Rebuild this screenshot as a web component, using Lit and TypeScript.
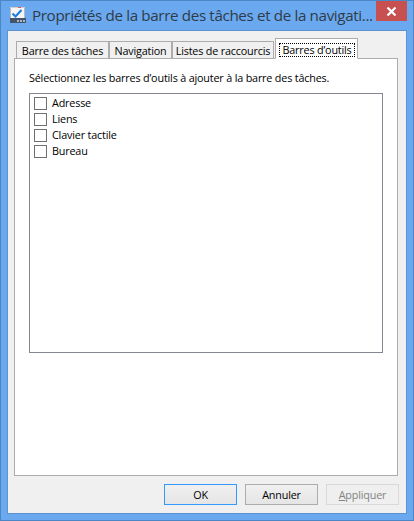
import { LitElement, html, css } from "lit";
import { customElement } from "lit/decorators.js";

@customElement("app-root")
export class AppRoot extends LitElement {
  static styles = css`
    :host { display: block; width: 414px; height: 521px; font-family: "Open Sans", "Noto Sans", sans-serif; font-size: 10.8px; letter-spacing: -0.18px; color: #000; }
    * { box-sizing: border-box; }
    .window { width: 414px; height: 521px; background: #6aa9ef; border: 1px solid #4d86c4; display: flex; flex-direction: column; padding: 0 6px 6px; overflow: hidden; }
    .title { height: 29px; flex: none; display: flex; align-items: flex-start; }
    .icon { width: 16px; height: 16px; margin: 6px 0 0 3px; flex: none; }
    .title-text { margin: 2px 0 0 6px; font-size: 15.2px; letter-spacing: -0.36px; line-height: 24px; color: #2f3b49; white-space: nowrap; flex: 1; min-width: 0; }
    .close { width: 31px; height: 20px; background: #c75050; display: flex; align-items: center; justify-content: center; flex: none; }
    .client { flex: 1; background: #f0f0f0; display: flex; flex-direction: column; padding: 0 7px 0 6px; border: 1px solid #5f93cf; }
    .tabs { display: flex; height: 28px; flex: none; align-items: flex-end; padding-left: 2px; position: relative; z-index: 1; margin-bottom: -1px; }
    .tab { height: 18px; border: 1px solid #acacac; background: #f0f0f0; display: flex; align-items: center; justify-content: center; white-space: nowrap; flex: none; }
    .tab.active { height: 21px; background: #fff; border-bottom-color: #fff; padding: 4px 2px 1px 3px; margin-left: 1px; }
    .focus { width: 100%; height: 100%; border: 1px dotted #000; display: flex; align-items: center; justify-content: center; padding-bottom: 1px; }
    .panel { height: 418px; width: 384px; flex: none; background: #fff; border: 1px solid #acacac; padding: 11px 14px 0; }
    .panel p { margin: 0 0 8px; line-height: 15px; white-space: nowrap; }
    .list { width: 354px; height: 260px; border: 1px solid #828790; padding: 3px 4px; }
    .row { display: flex; align-items: flex-start; height: 16px; gap: 5px; line-height: 12px; }
    .box { width: 13px; height: 13px; border: 1px solid #707070; background: #fff; flex: none; }
    .buttons { display: flex; gap: 8px; margin-top: 8px; padding-left: 150px; }
    .btn { width: 73px; height: 21px; flex: none; border: 1px solid #acacac; background: linear-gradient(#f0f0f0, #e5e5e5); display: flex; align-items: center; justify-content: center; }
    .btn.default { border-color: #3399ff; }
    .btn.disabled { border-color: #d9d9d9; background: #efefef; color: #838383; }
    u { text-underline-offset: 1px; }
  `;

  render() {
    return html`<div class="window">
      <div class="title">
        <svg class="icon" viewBox="0 0 16 16">
          <rect x="0.5" y="0.5" width="14" height="11" fill="#f6f6f6" stroke="#b9b9b9"/>
          <rect x="0" y="0" width="15" height="1" fill="#cfcfcf"/>
          <rect x="8" y="0" width="3" height="1" fill="#d65a5a"/>
          <path d="M2.5 6.5 L5.5 9.5 L11.5 3" fill="none" stroke="#1f7fe0" stroke-width="2.2"/>
          <rect x="0" y="11" width="16" height="5" fill="#44546a"/>
          <rect x="7" y="13" width="2" height="2" fill="#aeb8c4"/>
          <rect x="10" y="13" width="2" height="2" fill="#aeb8c4"/>
          <rect x="13" y="13" width="2" height="2" fill="#aeb8c4"/>
        </svg>
        <div class="title-text">Propriétés de la barre des tâches et de la navigati...</div>
        <div class="close">
          <svg width="11" height="9" viewBox="0 0 11 9"><path d="M1.5 0.5 L9.5 8.5 M9.5 0.5 L1.5 8.5" stroke="#fff" stroke-width="2.2" fill="none"/></svg>
        </div>
      </div>
      <div class="client">
        <div class="tabs">
          <div class="tab" style="width:93px">Barre des tâches</div>
          <div class="tab" style="width:63px">Navigation</div>
          <div class="tab" style="width:102px">Listes de raccourcis</div>
          <div class="tab active" style="width:83px"><div class="focus">Barres d’outils</div></div>
        </div>
        <div class="panel">
          <p>Sélectionnez les barres d’outils à ajouter à la barre des tâches.</p>
          <div class="list">
            ${["Adresse", "Liens", "Clavier tactile", "Bureau"].map(
              (t) => html`<div class="row"><span class="box"></span><span>${t}</span></div>`
            )}
          </div>
        </div>
        <div class="buttons">
          <div class="btn default">OK</div>
          <div class="btn">Annuler</div>
          <div class="btn disabled"><span><u>A</u>ppliquer</span></div>
        </div>
      </div>
    </div>`;
  }
}
